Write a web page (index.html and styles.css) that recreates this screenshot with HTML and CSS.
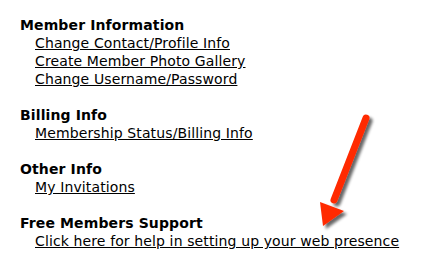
FILE: index.html
```html
<!DOCTYPE html>
<html lang="en">
<head>
    <meta charset="UTF-8">
    <title>Member Area</title>
    <link rel="stylesheet" href="styles.css">
</head>
<body>
    <div class="menu">
        <div class="group">
            <div class="group-title">Member Information</div>
            <a href="#">Change Contact/Profile Info</a>
            <a href="#">Create Member Photo Gallery</a>
            <a href="#">Change Username/Password</a>
        </div>
        <div class="group">
            <div class="group-title">Billing Info</div>
            <a href="#">Membership Status/Billing Info</a>
        </div>
        <div class="group">
            <div class="group-title">Other Info</div>
            <a href="#">My Invitations</a>
        </div>
        <div class="group">
            <div class="group-title">Free Members Support</div>
            <a href="#">Click here for help in setting up your web presence</a>
        </div>
    </div>

    <!-- arrow pointing at the help link -->
    <svg class="arrow" width="80" height="135" viewBox="0 0 80 135">
        <defs>
            <filter id="shadow" x="-30%" y="-30%" width="160%" height="160%">
                <feGaussianBlur in="SourceAlpha" stdDeviation="1.5"/>
                <feOffset dx="3" dy="3"/>
                <feComponentTransfer><feFuncA type="linear" slope="0.6"/></feComponentTransfer>
                <feMerge><feMergeNode/><feMergeNode in="SourceGraphic"/></feMerge>
            </filter>
        </defs>
        <g filter="url(#shadow)">
            <line x1="64" y1="18" x2="32" y2="100" stroke="#ff2a00" stroke-width="7" stroke-linecap="round"/>
            <polygon points="18,102 42,111 21,126" fill="#ff2a00"/>
        </g>
    </svg>
</body>
</html>
```

FILE: styles.css
```css
body {
    font-family: "DejaVu Sans", Verdana, sans-serif;
    font-size: 14px;
    letter-spacing: 0.12px;
    margin: 0;
    background-color: #ffffff;
    color: #000;
}
.menu {
    padding: 16px 20px;
}
.group {
    display: flex;
    flex-direction: column;
    align-items: flex-start;
    margin-bottom: 18px;
    line-height: 18px;
}
.group-title {
    font-weight: bold;
}
.group a {
    color: #000;
    margin-left: 15px;
}
.arrow {
    position: absolute;
    left: 302px;
    top: 100px;
}
```
